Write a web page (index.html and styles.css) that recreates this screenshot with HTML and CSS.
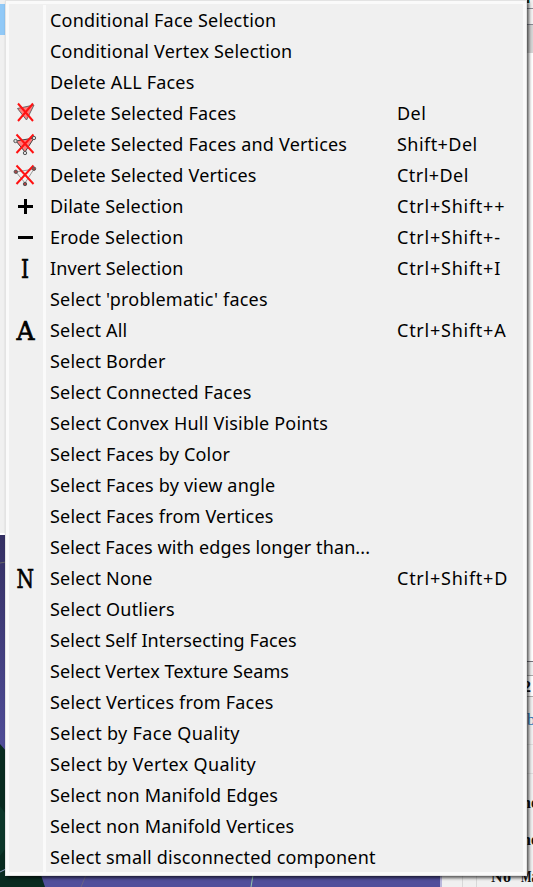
FILE: index.html
```
<!DOCTYPE html>
<html lang="en">
<head>
<meta charset="utf-8">
<title>Selection menu</title>
<link rel="stylesheet" href="styles.css">
</head>
<body>
<div class="desktop">
  <svg class="viewport" width="533" height="887" viewBox="0 0 533 887">
    <defs>
      <linearGradient id="sky" x1="0" y1="535" x2="0" y2="760" gradientUnits="userSpaceOnUse"><stop offset="0" stop-color="#353063"/><stop offset="1" stop-color="#514f9b"/></linearGradient>
    </defs>
    <rect width="533" height="887" fill="#f0f0f0"/>
    <rect y="4" width="6" height="31" fill="#91c9f7"/>
    <rect y="533" width="6" height="2" fill="#fff"/>
    <rect y="535" width="433" height="352" fill="url(#sky)"/>
    <path d="M0 563l6-1" stroke="#666" fill="none"/>
    <path d="M0 744l6 7v124h35l4 12H0z" fill="#092b20"/>
    <path d="M0 806l6 8v34l-6 8z" fill="#0d372a"/>
    <path d="M0 872l6-3" stroke="#8d9ec4"/>
    <path d="M86 875l-5 12" stroke="#6a6486"/>
    <path d="M253 875l-2 12" stroke="#95c7aa"/>
    <path d="M441 870v17" stroke="#b9b7db" stroke-width="2"/>
    <rect x="433" y="870" width="7" height="17" fill="#514f9b"/>
    <path d="M462.500 870v17M476.500 870v17" stroke="#d8d8d8"/>
    <path d="M527 0h2v3h-2z" fill="#321"/>
    <path d="M529 0h1v3h-1z" fill="#39c5e8"/>
    <rect x="526" y="25" width="7" height="28" fill="#d5d5d5"/>
    <rect x="526" y="9" width="7" height="15" fill="#f2f2f2"/>
    <path d="M526 8.500h7M526 24.500h7" stroke="#888b95"/>
    <rect x="526" y="53" width="7" height="608" fill="#fff"/>
    <path d="M526 661.500h7" stroke="#74747c"/>
    <rect x="526" y="676" width="7" height="20" fill="#fff"/>
    <path d="M526 675.500h7M526 696.500h7" stroke="#aaa"/>
    <path d="M526 744.500h7M526 773.500h7" stroke="#ddd"/>
    <g class="log">
      <text x="523" y="692">2</text>
      <text class="link" x="527" y="725">b</text>
      <text x="522" y="808">ne</text>
      <text x="522" y="845">ne</text>
      <text x="491" y="882" textLength="20">No</text>
      <text x="521" y="882" textLength="16" lengthAdjust="spacingAndGlyphs">Ma</text>
    </g>
  </svg>
  <ul class="menu">
    <li><i></i><span>Conditional Face Selection</span></li>
    <li><i></i><span>Conditional Vertex Selection</span></li>
    <li><i></i><span>Delete ALL Faces</span></li>
    <li><i><svg width="24" height="24"><path d="M5.500 7.500L22 4 14.500 19z" fill="#ff7c7c" stroke="#666"/><path class="cross" d="M6 2.500L21 20M21 2.500L6 20"/></svg></i><span>Delete Selected Faces</span><kbd>Del</kbd></li>
    <li><i><svg width="24" height="24"><path d="M4 9L22 6 13 20z" fill="#ff7c7c" stroke="#444"/><path class="cross" d="M4.500 2.500l17 18.500M21.500 2.500L4.500 21"/><g class="open"><circle cx="3.500" cy="9" r="1.700"/><circle cx="22" cy="6" r="1.700"/><circle cx="13" cy="21" r="1.700"/></g></svg></i><span>Delete Selected Faces and Vertices</span><kbd>Shift+Del</kbd></li>
    <li><i><svg width="24" height="24"><path d="M4 9L22 6 13 20z" fill="none" stroke="#999"/><path class="cross" d="M4.500 2.500l17 18.500M21.500 2.500L4.500 21"/><g class="solid"><circle cx="3.800" cy="8.800" r="1.700"/><circle cx="22" cy="5.700" r="1.700"/><circle cx="13" cy="21" r="1.700"/></g></svg></i><span>Delete Selected Vertices</span><kbd>Ctrl+Del</kbd></li>
    <li><i><svg width="24" height="24"><path class="bar" d="M6 12.500h15M13.500 5v15"/></svg></i><span>Dilate Selection</span><kbd class="wide">Ctrl+Shift++</kbd></li>
    <li><i><svg width="24" height="24"><path class="bar" d="M6 12.500h15"/></svg></i><span>Erode Selection</span><kbd class="wide">Ctrl+Shift+-</kbd></li>
    <li><i><svg width="24" height="24"><text class="glyph" x="9" y="21.500" textLength="8" lengthAdjust="spacingAndGlyphs">I</text></svg></i><span class="tight">Invert Selection</span><kbd class="wide">Ctrl+Shift+I</kbd></li>
    <li><i></i><span>Select 'problematic' faces</span></li>
    <li><i><svg width="24" height="24"><text class="glyph" x="4.500" y="21.500" textLength="18" lengthAdjust="spacingAndGlyphs">A</text></svg></i><span>Select All</span><kbd class="wide">Ctrl+Shift+A</kbd></li>
    <li><i></i><span>Select Border</span></li>
    <li><i></i><span>Select Connected Faces</span></li>
    <li><i></i><span>Select Convex Hull Visible Points</span></li>
    <li><i></i><span>Select Faces by Color</span></li>
    <li><i></i><span>Select Faces by view angle</span></li>
    <li><i></i><span>Select Faces from Vertices</span></li>
    <li><i></i><span class="tight">Select Faces with edges longer than...</span></li>
    <li><i><svg width="24" height="24"><text class="glyph" x="4.500" y="21.500" textLength="17.500" lengthAdjust="spacingAndGlyphs">N</text></svg></i><span>Select None</span><kbd class="wide">Ctrl+Shift+D</kbd></li>
    <li><i></i><span>Select Outliers</span></li>
    <li><i></i><span class="tight">Select Self Intersecting Faces</span></li>
    <li><i></i><span class="tight">Select Vertex Texture Seams</span></li>
    <li><i></i><span>Select Vertices from Faces</span></li>
    <li><i></i><span class="loose">Select by Face Quality</span></li>
    <li><i></i><span class="loose">Select by Vertex Quality</span></li>
    <li><i></i><span>Select non Manifold Edges</span></li>
    <li><i></i><span>Select non Manifold Vertices</span></li>
    <li><i></i><span>Select small disconnected component</span></li>
  </ul>
</div>
</body>
</html>
```
FILE: styles.css
```
* { box-sizing: border-box; }
body { margin: 0; overflow: hidden; }
.desktop { position: relative; width: 533px; height: 887px; overflow: hidden; }
.viewport { display: block; }
.log { font: bold 16px "Liberation Serif", serif; fill: #111; }
.log .link { font-weight: normal; fill: #236fb5; }
.menu {
  position: absolute; left: 5px; top: 0; width: 522px; height: 876px;
  margin: 0; padding: 4px 3px 3px; list-style: none;
  background: #f0f0f0;
  border: 1px solid #e3e3e3;
  box-shadow: inset 0 0 0 3px #fafafa, 2px 2px 3px rgba(0,0,0,.65);
  font: 18px/31px "Noto Sans", sans-serif; letter-spacing: .2px; color: #000;
}
.menu li { display: grid; grid-template-columns: 37px 347px 1fr; height: 31px; white-space: nowrap; }
.menu i { display: flex; align-items: center; justify-content: center; border-right: 3px solid #fafafa; width: 37px; padding: 0 4px 1px 0; }
.menu svg { overflow: visible; }
.menu span { padding-left: 4px; }
.menu .tight { letter-spacing: .1px; }
.menu .loose { letter-spacing: .34px; }
.menu kbd { font: inherit; padding-left: 4px; letter-spacing: .45px; }
.menu .wide { letter-spacing: .75px; }
.cross { fill: none; stroke: #f11; stroke-width: 2; }
.bar { fill: none; stroke: #000; stroke-width: 3; }
.open circle { fill: #ddd; stroke: #555; }
.solid circle { fill: #a44; stroke: #555; }
.glyph { font: 26px "DejaVu Serif", serif; letter-spacing: 0; stroke: #000; stroke-width: .7; }
```
